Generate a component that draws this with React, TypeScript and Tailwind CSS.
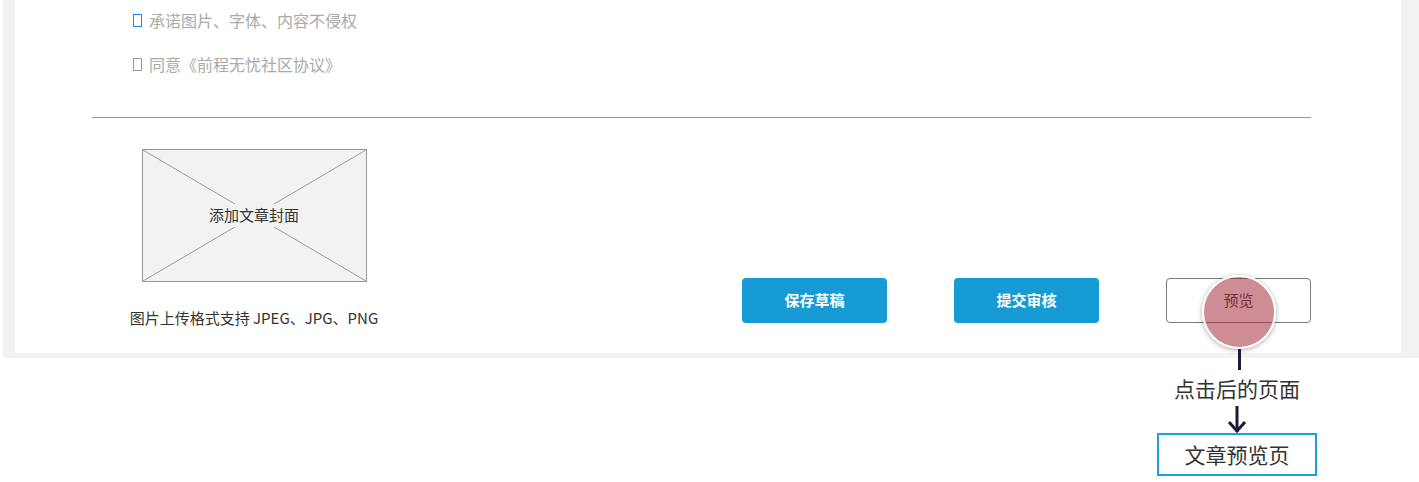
import React from 'react';

const font = { fontFamily: '"Noto Sans CJK SC", "Noto Sans", sans-serif' };

function TofuBox({ className }: { className: string }) {
  return <span className={`inline-block h-[13px] w-[9px] border-[1.5px] ${className}`} />;
}

function CoverPlaceholder() {
  return (
    <div className="relative h-[133px] w-[225px] border border-[#999999] bg-[#f2f2f2]">
      <svg className="absolute inset-0 h-full w-full" preserveAspectRatio="none" viewBox="0 0 225 133">
        <line stroke="#999999" strokeWidth="1" x1="0" x2="225" y1="0" y2="133" />
        <line stroke="#999999" strokeWidth="1" x1="225" x2="0" y1="0" y2="133" />
      </svg>
      <div className="absolute inset-0 flex items-center justify-center">
        <span className="bg-[#f2f2f2] px-1 text-[15px] text-[#333333]">添加文章封面</span>
      </div>
    </div>
  );
}

export default function App() {
  return (
    <div className="h-[482px] w-full overflow-hidden bg-white" style={font}>
      <div className="ml-[3px] w-[1416px] bg-[#f2f2f2] pb-[5px] pl-[12px] pr-[18px]">
        <div className="h-[353px] bg-white">
          <div className="space-y-[20px] pl-[118px] pt-[8px] text-[16px] text-[#aaaaaa]">
            <div className="flex h-[24px] items-center gap-[7px]">
              <TofuBox className="border-[#1e88f0]" />
              <span>承诺图片、字体、内容不侵权</span>
            </div>
            <div className="flex h-[24px] items-center gap-[7px]">
              <TofuBox className="border-[#999999]" />
              <span>同意《前程无忧社区协议》</span>
            </div>
          </div>

          <div className="ml-[77px] mt-[41px] h-px w-[1219px] bg-[#999999]" />

          <div className="flex items-start pt-[31px]">
            <div className="ml-[112px] flex w-[254px] flex-col items-center">
              <CoverPlaceholder />
              <p className="mt-[25px] whitespace-nowrap text-[15px] text-[#333333]">
                图片上传格式支持 JPEG、JPG、PNG
              </p>
            </div>

            <div className="ml-[361px] mt-[129px] flex gap-[67px]">
              <button
                className="h-[45px] w-[145px] rounded-[4px] bg-[#169bd5] text-[15px] font-bold text-white"
                type="button">
                保存草稿
              </button>
              <button
                className="h-[45px] w-[145px] rounded-[4px] bg-[#169bd5] text-[15px] font-bold text-white"
                type="button">
                提交审核
              </button>
              <div className="relative">
                <button
                  className="h-[45px] w-[145px] rounded-[4px] border border-[#797979] bg-white text-[15px] text-[#333333]"
                  type="button">
                  预览
                </button>
                <div className="absolute left-[36px] top-[-3px] h-[74px] w-[74px] rounded-full border-2 border-white bg-[rgba(165,45,60,0.55)] shadow-[0_1px_5px_rgba(0,0,0,0.35)]" />
                <div className="absolute left-[72px] top-[71px] h-[21px] w-[3px] bg-[#1c1c3a]" />
              </div>
            </div>
          </div>
        </div>
      </div>

      <div className="ml-[1157px] flex w-[160px] flex-col items-center pt-[16px]">
        <p className="text-[21px] leading-[28px] text-[#333333]">点击后的页面</p>
        <svg className="mt-[4px]" height="28" viewBox="0 0 22 28" width="22">
          <line stroke="#1c1c3a" strokeWidth="3" x1="11" x2="11" y1="0" y2="26" />
          <polyline fill="none" points="3,16 11,25 19,16" stroke="#1c1c3a" strokeWidth="3" />
        </svg>
        <div className="-mt-[1px] flex h-[43px] w-[160px] items-center justify-center border-2 border-[#1ba0e1] text-[21px] text-[#333333]">
          文章预览页
        </div>
      </div>
    </div>
  );
}
